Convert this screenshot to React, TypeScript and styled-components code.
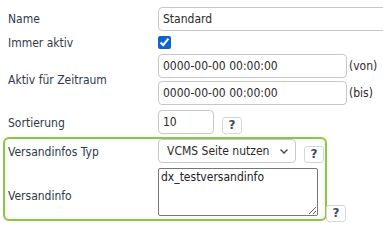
import React from "react";
import styled, { createGlobalStyle } from "styled-components";

const GlobalStyle = createGlobalStyle`
  html, body {
    margin: 0;
    padding: 0;
    background: #fff;
    overflow: hidden;
  }
  body {
    font-family: "DejaVu Sans Condensed", "DejaVu Sans", sans-serif;
    font-size: 12px;
    color: #2d3a4a;
  }
`;

const Form = styled.div`
  width: 383px;
  height: 225px;
  padding: 7px 0 0 3px;
  box-sizing: border-box;
  overflow: hidden;
`;

const Row = styled.div<{ $mt?: number; $h?: number }>`
  display: flex;
  align-items: center;
  padding-left: 5px;
  margin-top: ${({ $mt }) => $mt ?? 0}px;
  height: ${({ $h }) => ($h ? `${$h}px` : "auto")};
`;

const Label = styled.div<{ $pt?: number }>`
  width: 150px;
  flex-shrink: 0;
  white-space: nowrap;
  padding-top: ${({ $pt }) => $pt ?? 0}px;
`;

const Field = styled.div<{ $align?: string }>`
  display: flex;
  align-items: ${({ $align }) => $align ?? "center"};
`;

const Stack = styled.div`
  display: flex;
  flex-direction: column;
  gap: 3px;
`;

const TextInput = styled.input<{ $w: number }>`
  width: ${({ $w }) => $w}px;
  height: 24px;
  box-sizing: border-box;
  border: 1px solid #c8c8c8;
  border-radius: 4px;
  padding: 0 4px;
  font-family: inherit;
  font-size: 12px;
  color: #2a2a2a;
  background: #fff;
  outline: none;
  margin: 0;
`;

const Suffix = styled.span`
  margin-left: 2px;
  color: #2a2a2a;
`;

const Check = styled.input`
  width: 13px;
  height: 13px;
  margin: 0;
  accent-color: #0b63d6;
`;

const HelpButton = styled.button<{ $ml?: number; $mb?: number }>`
  width: 20px;
  height: 17px;
  box-sizing: border-box;
  margin: 0 0 ${({ $mb }) => $mb ?? 0}px ${({ $ml }) => $ml ?? 8}px;
  padding: 0;
  border: 1px solid #d6d6d6;
  border-radius: 3px;
  background: #fff;
  color: #3d4b5c;
  font-family: "DejaVu Sans", sans-serif;
  font-weight: bold;
  font-size: 12px;
  line-height: 15px;
  text-align: center;
  position: relative;
  z-index: 1;
`;

const Group = styled.div`
  width: 324px;
  box-sizing: border-box;
  margin-top: 3px;
  padding: 0 0 3px 0;
  border: 2px solid #8dc63f;
  border-radius: 6px;
  box-shadow: inset 0 0 6px rgba(0, 0, 0, 0.08);
`;

const GroupRow = styled.div<{ $mt?: number }>`
  display: flex;
  align-items: center;
  padding-left: 3px;
  margin-top: ${({ $mt }) => $mt ?? 0}px;
`;

const SelectBox = styled.div`
  width: 138px;
  height: 24px;
  box-sizing: border-box;
  border: 1px solid #c8c8c8;
  border-radius: 4px;
  background: #fff;
  display: flex;
  align-items: center;
  justify-content: space-between;
  padding: 0 6px 0 8px;
  color: #2a2a2a;
  white-space: nowrap;
`;

const Chevron = styled.svg`
  width: 10px;
  height: 10px;
`;

const TextArea = styled.textarea`
  width: 160px;
  height: 48px;
  box-sizing: border-box;
  border: 1px solid #767676;
  border-radius: 2px;
  padding: 1px 2px;
  margin: 0;
  font-family: inherit;
  font-size: 12px;
  color: #222;
  resize: both;
  outline: none;
  display: block;
`;

export default function App() {
  return (
    <>
      <GlobalStyle />
      <Form>
        <Row $h={24}>
          <Label>Name</Label>
          <Field>
            <TextInput $w={232} defaultValue="Standard" />
          </Field>
        </Row>
        <Row $h={23}>
          <Label>Immer aktiv</Label>
          <Field>
            <Check type="checkbox" defaultChecked />
          </Field>
        </Row>
        <Row>
          <Label>Aktiv für Zeitraum</Label>
          <Stack>
            <Field>
              <TextInput $w={189} defaultValue="0000-00-00 00:00:00" />
              <Suffix>(von)</Suffix>
            </Field>
            <Field>
              <TextInput $w={189} defaultValue="0000-00-00 00:00:00" />
              <Suffix>(bis)</Suffix>
            </Field>
          </Stack>
        </Row>
        <Row $mt={5}>
          <Label $pt={2}>Sortierung</Label>
          <Field $align="flex-end">
            <TextInput $w={56} defaultValue="10" />
            <HelpButton>?</HelpButton>
          </Field>
        </Row>
        <Group>
          <GroupRow>
            <Label $pt={2}>Versandinfos Typ</Label>
            <Field $align="flex-end">
              <SelectBox>
                VCMS Seite nutzen
                <Chevron viewBox="0 0 10 10">
                  <path d="M1.5 3.5 L5 7 L8.5 3.5" fill="none" stroke="#444" strokeWidth="1.3" />
                </Chevron>
              </SelectBox>
              <HelpButton>?</HelpButton>
            </Field>
          </GroupRow>
          <GroupRow $mt={5}>
            <Label $pt={7}>Versandinfo</Label>
            <Field $align="flex-end">
              <TextArea defaultValue="dx_testversandinfo" />
              <HelpButton $mb={-6}>?</HelpButton>
            </Field>
          </GroupRow>
        </Group>
      </Form>
    </>
  );
}
